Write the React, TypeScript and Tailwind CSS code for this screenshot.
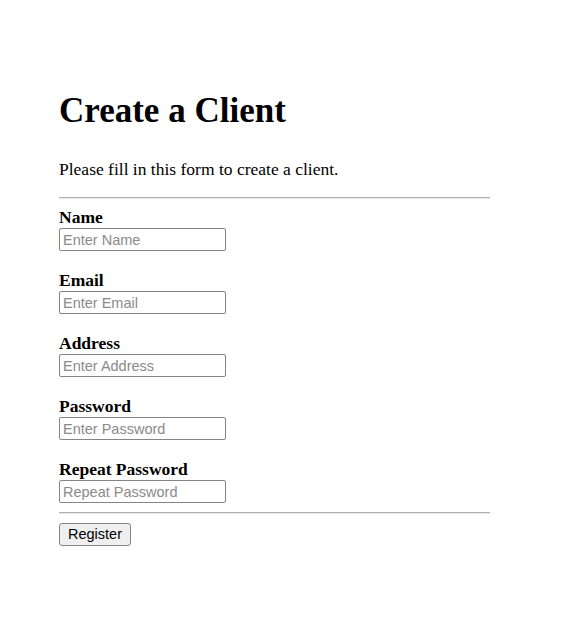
import React from "react";

const fields = [
  { label: "Name", placeholder: "Enter Name", type: "text" },
  { label: "Email", placeholder: "Enter Email", type: "text" },
  { label: "Address", placeholder: "Enter Address", type: "text" },
  { label: "Password", placeholder: "Enter Password", type: "password" },
  { label: "Repeat Password", placeholder: "Repeat Password", type: "password" },
];

export default function App() {
  return (
    <div className="min-h-[631px] w-[564px] bg-white text-black font-['Liberation_Serif',serif]">
      <div className="pl-[59px] pt-[91px] w-[490px]">
        <h1 className="text-[35px] leading-[40px] font-bold m-0">Create a Client</h1>
        <p className="mt-[28px] text-[17.5px] leading-[20px]">Please fill in this form to create a client.</p>
        <div className="mt-[18px] h-0 border-t border-t-[#b0b0b0] border-b border-b-[#e6e6e6]" />
        <div className="pt-[8px] flex flex-col gap-[19px]">
          {fields.map((f) => (
            <div key={f.label} className="flex flex-col">
              <label className="text-[17.5px] leading-[20px] font-bold">{f.label}</label>
              <input
                type={f.type}
                placeholder={f.placeholder}
                className="mt-[1px] w-[167px] h-[23px] border border-[#858585] rounded-[2px] px-[3px] text-[14.5px] font-['Liberation_Sans',Arial,sans-serif] placeholder:text-[#8a8a8a] outline-none"
              />
            </div>
          ))}
        </div>
        <div className="mt-[9px] h-0 border-t border-t-[#b0b0b0] border-b border-b-[#e6e6e6]" />
        <button className="mt-[9px] w-[72px] h-[23px] border border-[#858585] rounded-[3px] bg-[#efefef] text-[14.5px] leading-none font-['Liberation_Sans',Arial,sans-serif] text-black flex items-center justify-center">
          Register
        </button>
      </div>
    </div>
  );
}
